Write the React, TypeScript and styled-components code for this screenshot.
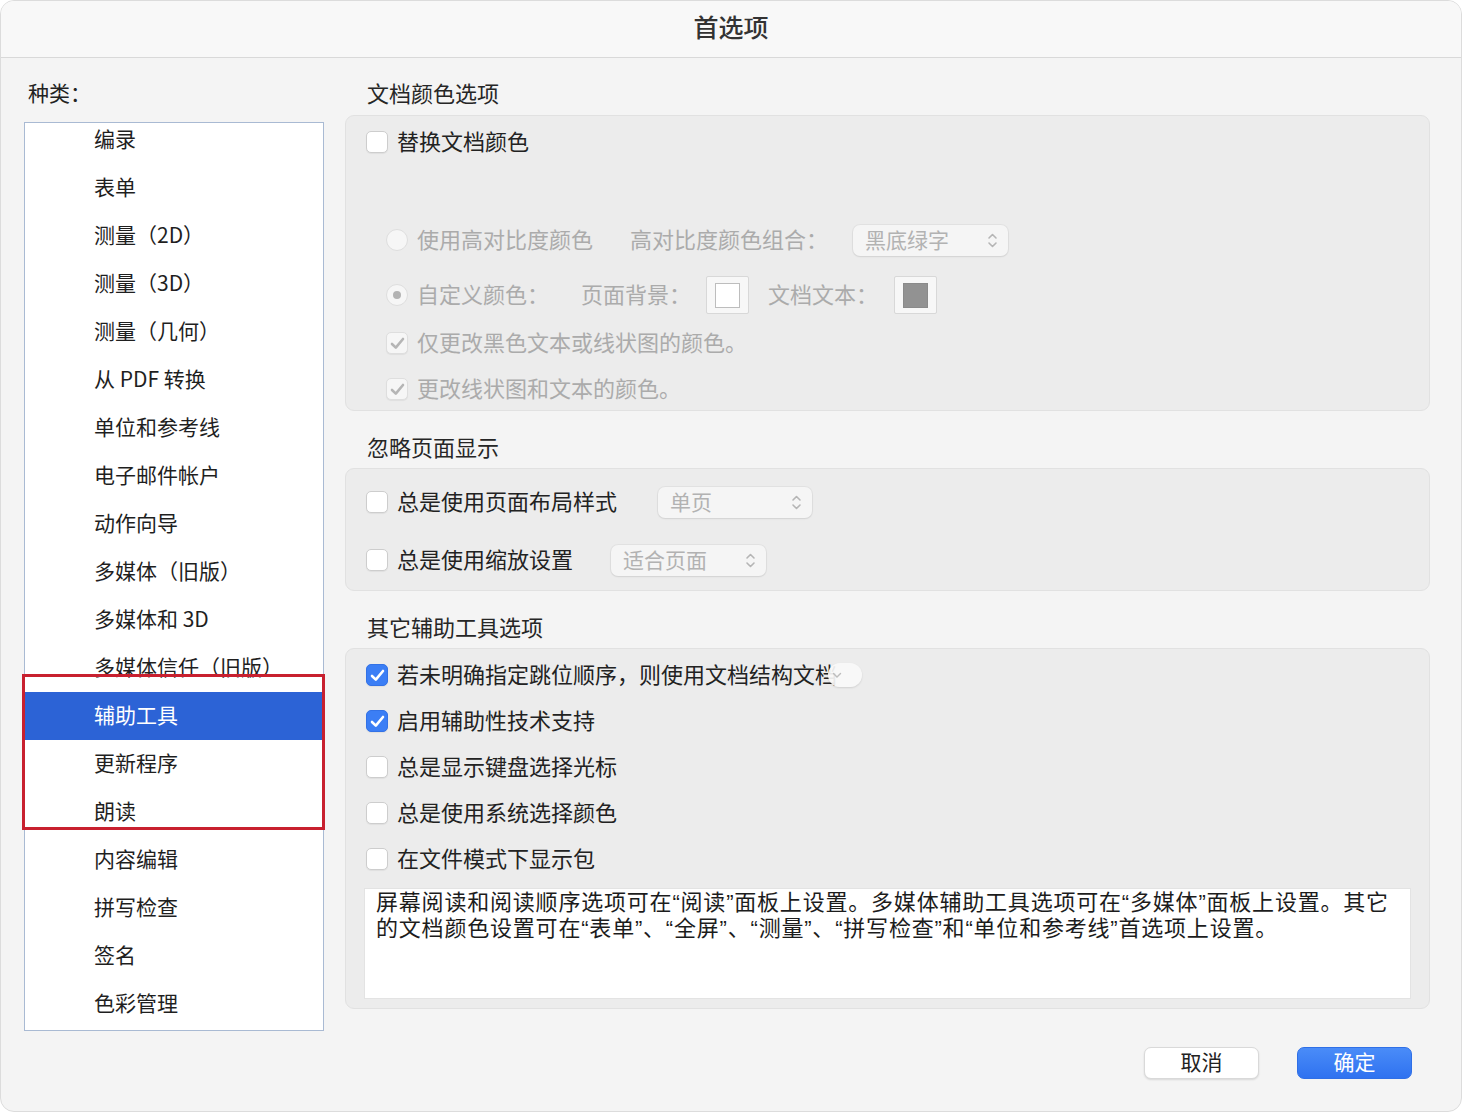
import React from 'react';
import styled, { createGlobalStyle, css } from 'styled-components';

const GlobalStyle = createGlobalStyle`
  html, body {
    margin: 0;
    padding: 0;
    background: #ffffff;
  }
  body {
    font-family: "Noto Sans CJK SC", "Noto Sans", "Liberation Sans", sans-serif;
    color: #222222;
  }
  * {
    box-sizing: border-box;
  }
`;

const Window = styled.div`
  width: 1462px;
  height: 1112px;
  background: #f4f4f4;
  border: 1px solid #dcdcdc;
  border-radius: 14px;
  overflow: hidden;
  display: flex;
  flex-direction: column;
`;

const TitleBar = styled.div`
  height: 57px;
  flex: none;
  background: #f8f8f8;
  border-bottom: 1px solid #d9d9d9;
  display: flex;
  align-items: center;
  justify-content: center;
  font-size: 25px;
  font-weight: 500;
  color: #333333;
  padding-bottom: 6px;
`;

const Main = styled.div`
  display: flex;
  gap: 21px;
  padding: 21px 31px 0 23px;
`;

const LeftColumn = styled.div`
  width: 300px;
  flex: none;
  display: flex;
  flex-direction: column;
`;

const CategoryLabel = styled.div`
  height: 30px;
  line-height: 26px;
  font-size: 21px;
  padding-left: 4px;
  margin-bottom: 13px;
`;

const ListWrap = styled.div`
  position: relative;
`;

const ListBox = styled.div`
  height: 909px;
  background: #ffffff;
  border: 1px solid #a9bad3;
  overflow: hidden;
`;

const ListItems = styled.div`
  margin-top: -7px;
  display: flex;
  flex-direction: column;
`;

const ListItem = styled.div<{ $selected?: boolean }>`
  height: 48px;
  display: flex;
  align-items: center;
  padding: 0 0 4px 69px;
  font-size: 21px;
  color: #1f1f1f;
  ${(p) =>
    p.$selected &&
    css`
      background: #2c63d6;
      color: #ffffff;
    `}
`;

const Highlight = styled.div`
  position: absolute;
  left: -2px;
  top: 552px;
  width: 303px;
  height: 156px;
  border: 3px solid #c8202f;
  pointer-events: none;
`;

const RightColumn = styled.div`
  flex: 1;
  display: flex;
  flex-direction: column;
`;

const SectionTitle = styled.div<{ $first?: boolean }>`
  height: 30px;
  line-height: 26px;
  font-size: 22px;
  padding-left: 22px;
  margin-top: ${(p) => (p.$first ? '0' : '22px')};
  margin-bottom: ${(p) => (p.$first ? '6px' : '5px')};
  color: #262626;
`;

const GroupBox = styled.div<{ $h: number; $pt: number }>`
  height: ${(p) => p.$h}px;
  background: #ececec;
  border: 1px solid #e1e1e1;
  border-radius: 9px;
  padding: ${(p) => p.$pt}px 20px 0 20px;
  display: flex;
  flex-direction: column;
`;

const Row = styled.div<{ $mt?: number; $indent?: boolean; $h?: number }>`
  position: relative;
  height: ${(p) => p.$h ?? 32}px;
  margin-top: ${(p) => p.$mt ?? 0}px;
  padding-left: ${(p) => (p.$indent ? '20px' : '0')};
  display: flex;
  align-items: center;
  flex: none;
`;

const Label = styled.span<{ $disabled?: boolean; $gap?: number }>`
  font-size: 22px;
  white-space: nowrap;
  padding-bottom: 4px;
  color: ${(p) => (p.$disabled ? '#ababab' : '#222222')};
  margin-left: ${(p) => p.$gap ?? 9}px;
`;

const Box = styled.span<{ $checked?: boolean; $disabled?: boolean }>`
  width: 22px;
  height: 22px;
  flex: none;
  border-radius: 5px;
  display: inline-flex;
  align-items: center;
  justify-content: center;
  background: ${(p) => (p.$checked ? '#3b7ef5' : p.$disabled ? '#f6f6f6' : '#ffffff')};
  border: 1px solid ${(p) => (p.$checked ? '#3372e6' : p.$disabled ? '#dedede' : '#cdcdcd')};
  box-shadow: 0 1px 1px rgba(0, 0, 0, 0.06);
`;

const Radio = styled.span<{ $on?: boolean }>`
  width: 22px;
  height: 22px;
  flex: none;
  border-radius: 50%;
  background: #f6f6f6;
  border: 1px solid #dedede;
  display: inline-flex;
  align-items: center;
  justify-content: center;
  &::after {
    content: '';
    width: 8px;
    height: 8px;
    border-radius: 50%;
    background: ${(p) => (p.$on ? '#b3b3b3' : 'transparent')};
  }
`;

const Select = styled.div<{ $w: number; $ml: number }>`
  width: ${(p) => p.$w}px;
  height: 31px;
  margin-left: ${(p) => p.$ml}px;
  flex: none;
  border-radius: 7px;
  background: #f5f5f5;
  box-shadow: 0 0 0 1px rgba(0, 0, 0, 0.04), 0 1px 2px rgba(0, 0, 0, 0.08);
  display: flex;
  align-items: center;
  justify-content: space-between;
  padding: 0 10px 0 12px;
  font-size: 21px;
  color: #b2b2b2;
  span {
    padding-bottom: 3px;
  }
`;

const Swatch = styled.div<{ $ml: number }>`
  width: 43px;
  height: 38px;
  margin-left: ${(p) => p.$ml}px;
  flex: none;
  background: #f7f7f7;
  border: 1px solid #d8d8d8;
  border-radius: 2px;
  display: flex;
  align-items: center;
  justify-content: center;
`;

const SwatchFill = styled.div<{ $color: string }>`
  width: 25px;
  height: 25px;
  background: ${(p) => p.$color};
  border: 1px solid ${(p) => (p.$color === '#ffffff' ? '#bdbdbd' : '#8a8a8a')};
`;

const TipPill = styled.div`
  position: absolute;
  left: 462px;
  top: 4px;
  width: 34px;
  height: 24px;
  border-radius: 12px;
  background: rgba(248, 248, 248, 0.92);
  box-shadow: 0 1px 2px rgba(0, 0, 0, 0.12);
  display: flex;
  align-items: center;
  padding-left: 4px;
`;

const InfoBox = styled.div`
  margin: 13px -2px 0 -2px;
  height: 111px;
  background: #ffffff;
  border: 1px solid #e3e3e3;
  padding: 1px 11px;
  font-family: "Liberation Sans", "Noto Sans CJK SC", sans-serif;
  font-size: 22px;
  line-height: 26px;
  letter-spacing: 0.8px;
  color: #1c1c1c;
  white-space: nowrap;
`;

const Footer = styled.div`
  display: flex;
  justify-content: flex-end;
  gap: 38px;
  padding: 16px 49px 0 0;
`;

const Button = styled.button<{ $primary?: boolean }>`
  width: 115px;
  height: 32px;
  border-radius: 7px;
  font-family: inherit;
  font-size: 21px;
  line-height: 1;
  padding: 0 0 3px;
  cursor: pointer;
  ${(p) =>
    p.$primary
      ? css`
          background: linear-gradient(#4a8cf8, #2f72f0);
          color: #ffffff;
          border: 1px solid #2f6fe6;
        `
      : css`
          background: #ffffff;
          color: #222222;
          border: 1px solid #d9d9d9;
          box-shadow: 0 1px 2px rgba(0, 0, 0, 0.12);
        `}
`;

const Check = ({ color }: { color: string }) => (
  <svg width="15" height="13" viewBox="0 0 15 13">
    <path d="M2 7 L5.8 10.6 L13 2" fill="none" stroke={color} strokeWidth="2.6" strokeLinecap="round" strokeLinejoin="round" />
  </svg>
);

const Checkbox = ({ checked, disabled }: { checked?: boolean; disabled?: boolean }) => (
  <Box $checked={checked && !disabled} $disabled={disabled}>
    {checked && <Check color={disabled ? '#b5b5b5' : '#ffffff'} />}
  </Box>
);

const Updown = () => (
  <svg width="11" height="17" viewBox="0 0 11 17">
    <path d="M2 6 L5.5 2.5 L9 6 M2 11 L5.5 14.5 L9 11" fill="none" stroke="#b5b5b5" strokeWidth="1.6" strokeLinecap="round" strokeLinejoin="round" />
  </svg>
);

const categories = [
  '编录',
  '表单',
  '测量（2D）',
  '测量（3D）',
  '测量（几何）',
  '从 PDF 转换',
  '单位和参考线',
  '电子邮件帐户',
  '动作向导',
  '多媒体（旧版）',
  '多媒体和 3D',
  '多媒体信任（旧版）',
  '辅助工具',
  '更新程序',
  '朗读',
  '内容编辑',
  '拼写检查',
  '签名',
  '色彩管理',
];

const otherOptions = [
  { text: '启用辅助性技术支持', checked: true },
  { text: '总是显示键盘选择光标', checked: false },
  { text: '总是使用系统选择颜色', checked: false },
  { text: '在文件模式下显示包', checked: false },
];

export default function App() {
  return (
    <>
      <GlobalStyle />
      <Window>
        <TitleBar>首选项</TitleBar>
        <Main>
          <LeftColumn>
            <CategoryLabel>种类：</CategoryLabel>
            <ListWrap>
              <ListBox>
                <ListItems>
                  {categories.map((c) => (
                    <ListItem key={c} $selected={c === '辅助工具'}>
                      {c}
                    </ListItem>
                  ))}
                </ListItems>
              </ListBox>
              <Highlight />
            </ListWrap>
          </LeftColumn>

          <RightColumn>
            <SectionTitle $first>文档颜色选项</SectionTitle>
            <GroupBox $h={296} $pt={10}>
              <Row>
                <Checkbox />
                <Label>替换文档颜色</Label>
              </Row>
              <Row $indent $mt={66}>
                <Radio />
                <Label $disabled>使用高对比度颜色</Label>
                <Label $disabled $gap={37}>高对比度颜色组合：</Label>
                <Select $w={155} $ml={25}>
                  <span>黑底绿字</span>
                  <Updown />
                </Select>
              </Row>
              <Row $indent $mt={20} $h={38}>
                <Radio $on />
                <Label $disabled>自定义颜色：</Label>
                <Label $disabled $gap={32}>页面背景：</Label>
                <Swatch $ml={15}>
                  <SwatchFill $color="#ffffff" />
                </Swatch>
                <Label $disabled $gap={19}>文档文本：</Label>
                <Swatch $ml={16}>
                  <SwatchFill $color="#929292" />
                </Swatch>
              </Row>
              <Row $indent $mt={13}>
                <Checkbox checked disabled />
                <Label $disabled>仅更改黑色文本或线状图的颜色。</Label>
              </Row>
              <Row $indent $mt={14}>
                <Checkbox checked disabled />
                <Label $disabled>更改线状图和文本的颜色。</Label>
              </Row>
            </GroupBox>

            <SectionTitle>忽略页面显示</SectionTitle>
            <GroupBox $h={123} $pt={17}>
              <Row>
                <Checkbox />
                <Label>总是使用页面布局样式</Label>
                <Select $w={154} $ml={41}>
                  <span>单页</span>
                  <Updown />
                </Select>
              </Row>
              <Row $mt={26}>
                <Checkbox />
                <Label>总是使用缩放设置</Label>
                <Select $w={155} $ml={38}>
                  <span>适合页面</span>
                  <Updown />
                </Select>
              </Row>
            </GroupBox>

            <SectionTitle>其它辅助工具选项</SectionTitle>
            <GroupBox $h={361} $pt={10}>
              <Row>
                <Checkbox checked />
                <Label>若未明确指定跳位顺序，则使用文档结构文档</Label>
                <TipPill>
                  <svg width="10" height="7" viewBox="0 0 10 7">
                    <path d="M1.5 1.5 L5 5 L8.5 1.5" fill="none" stroke="#bdbdbd" strokeWidth="1.4" strokeLinecap="round" />
                  </svg>
                </TipPill>
              </Row>
              {otherOptions.map((o) => (
                <Row key={o.text} $mt={14}>
                  <Checkbox checked={o.checked} />
                  <Label>{o.text}</Label>
                </Row>
              ))}
              <InfoBox>
                屏幕阅读和阅读顺序选项可在“阅读”面板上设置。多媒体辅助工具选项可在“多媒体”面板上设置。其它
                <br />
                的文档颜色设置可在“表单”、“全屏”、“测量”、“拼写检查”和“单位和参考线”首选项上设置。
              </InfoBox>
            </GroupBox>
          </RightColumn>
        </Main>
        <Footer>
          <Button>取消</Button>
          <Button $primary>确定</Button>
        </Footer>
      </Window>
    </>
  );
}
